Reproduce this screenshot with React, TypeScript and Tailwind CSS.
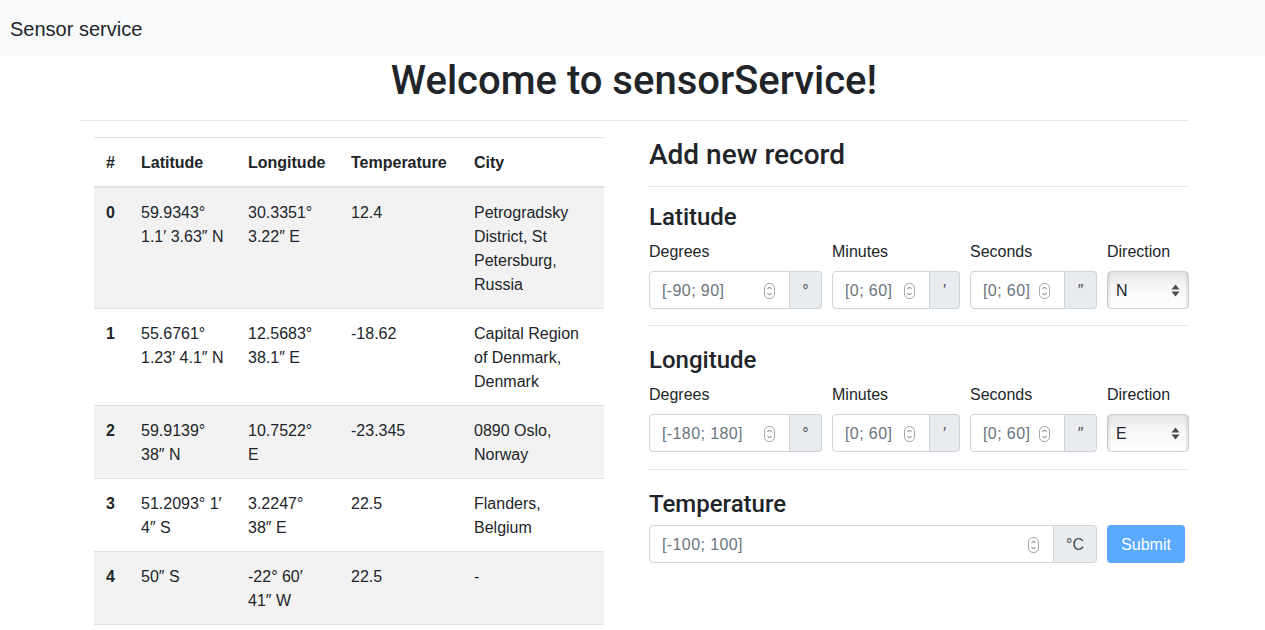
import React from "react"

type Row = {
  id: number
  lat: string[]
  lon: string[]
  temp: string
  city: string[]
}

const rows: Row[] = [
  { id: 0, lat: ["59.9343°", "1.1′ 3.63″ N"], lon: ["30.3351°", "3.22″ E"], temp: "12.4", city: ["Petrogradsky", "District, St", "Petersburg,", "Russia"] },
  { id: 1, lat: ["55.6761°", "1.23′ 4.1″ N"], lon: ["12.5683°", "38.1″ E"], temp: "-18.62", city: ["Capital Region", "of Denmark,", "Denmark"] },
  { id: 2, lat: ["59.9139°", "38″ N"], lon: ["10.7522°", "E"], temp: "-23.345", city: ["0890 Oslo,", "Norway"] },
  { id: 3, lat: ["51.2093° 1′", "4″ S"], lon: ["3.2247°", "38″ E"], temp: "22.5", city: ["Flanders,", "Belgium"] },
  { id: 4, lat: ["50″ S"], lon: ["-22° 60′", "41″ W"], temp: "22.5", city: ["-"] },
]

function Lines({ lines }: { lines: string[] }) {
  return (
    <>
      {lines.map((l, i) => (
        <div key={i} className="whitespace-nowrap">{l}</div>
      ))}
    </>
  )
}

function Spinner() {
  return (
    <svg width="11" height="16" viewBox="0 0 11 16" className="shrink-0">
      <rect x="0.5" y="0.5" width="10" height="15" rx="4.5" fill="white" stroke="#a8a8a8" />
      <path d="M3.5 6 L5.5 4 L7.5 6" fill="none" stroke="#6b6b6b" strokeWidth="1" />
      <path d="M3.5 10 L5.5 12 L7.5 10" fill="none" stroke="#6b6b6b" strokeWidth="1" />
    </svg>
  )
}

function NumberGroup({ placeholder, addon, addonClass }: { placeholder: string; addon: string; addonClass: string }) {
  return (
    <div className="flex h-[38px]">
      <div className="flex min-w-0 flex-1 items-center rounded-l border border-[#ced4da] bg-white pl-3 pr-[14px] pt-px">
        <span className="flex-1 whitespace-nowrap tracking-[0.4px] text-[#6c757d]">{placeholder}</span>
        <Spinner />
      </div>
      <div className={`flex items-center justify-center rounded-r border border-l-0 border-[#ced4da] bg-[#e9ecef] pt-px text-[#495057] ${addonClass}`}>
        {addon}
      </div>
    </div>
  )
}

function DirectionSelect({ value }: { value: string }) {
  return (
    <div className="flex h-[38px] items-center justify-between rounded border border-[#cfcfcf] bg-[linear-gradient(to_bottom,#e6e6e6,#f6f6f6_40%,#ffffff)] pt-px pl-2 pr-[8px] text-[#212529] shadow-[inset_3px_0_3px_-2px_rgba(0,0,0,0.14),inset_-3px_0_3px_-2px_rgba(0,0,0,0.14)]">
      <span>{value}</span>
      <svg width="9" height="13" viewBox="0 0 9 13">
        <path d="M4.5 0.5 L8.5 5.5 L0.5 5.5 Z" fill="#4a4a4a" />
        <path d="M4.5 12.5 L8.5 7.5 L0.5 7.5 Z" fill="#4a4a4a" />
      </svg>
    </div>
  )
}

const heading = "font-['Roboto','Liberation_Sans',sans-serif] font-medium"

function CoordSection({ title, degrees, dir, topClass }: { title: string; degrees: string; dir: string; topClass: string }) {
  return (
    <>
      <h4 className={`text-2xl leading-[29px] ${heading} ${topClass}`}>{title}</h4>
      <div className="mt-[7px] grid grid-cols-[173px_128px_127px_82px] gap-x-[10px]">
        <div>
          <label className="mb-[7px] block pt-px leading-6">Degrees</label>
          <NumberGroup placeholder={degrees} addon="°" addonClass="w-[32px]" />
        </div>
        <div>
          <label className="mb-[7px] block pt-px leading-6">Minutes</label>
          <NumberGroup placeholder="[0; 60]" addon="′" addonClass="w-[30px]" />
        </div>
        <div>
          <label className="mb-[7px] block pt-px leading-6">Seconds</label>
          <NumberGroup placeholder="[0; 60]" addon="″" addonClass="w-[32px]" />
        </div>
        <div>
          <label className="mb-[7px] block pt-px leading-6">Direction</label>
          <DirectionSelect value={dir} />
        </div>
      </div>
    </>
  )
}

export default function App() {
  return (
    <div className="min-h-screen bg-white font-['Liberation_Sans',Arial,sans-serif] text-base text-[#212529]">
      <nav className="flex h-14 items-center bg-[#f8f9fa] px-[10px] pt-px text-[20px]">Sensor service</nav>

      <div className="ml-[79px] w-[1110px]">
        <h1 className={`pt-px text-center text-[40px] leading-[47px] ${heading}`}>Welcome to sensorService!</h1>
        <hr className="mt-4 mb-4 border-[#e6e6e6]" />

        <div className="grid grid-cols-2 items-start gap-[30px]">
          <div className="px-[15px]">
            <table className="w-[510px] table-fixed border-collapse text-left">
              <colgroup>
                <col className="w-[35px]" />
                <col className="w-[107px]" />
                <col className="w-[103px]" />
                <col className="w-[123px]" />
                <col className="w-[142px]" />
              </colgroup>
              <thead>
                <tr className="border-t border-b-2 border-[#dee2e6]">
                  <th className="px-3 pt-[13px] pb-[11px] align-bottom leading-6 font-bold">#</th>
                  <th className="px-3 pt-[13px] pb-[11px] align-bottom leading-6 font-bold">Latitude</th>
                  <th className="px-3 pt-[13px] pb-[11px] align-bottom leading-6 font-bold">Longitude</th>
                  <th className="px-3 pt-[13px] pb-[11px] align-bottom leading-6 font-bold">Temperature</th>
                  <th className="px-3 pt-[13px] pb-[11px] align-bottom leading-6 font-bold">City</th>
                </tr>
              </thead>
              <tbody>
                {rows.map((r) => (
                  <tr key={r.id} className={`border-b border-[#dee2e6] ${r.id % 2 === 0 ? "bg-[#f2f2f2]" : "bg-white"}`}>
                    <th className="px-3 pt-[13px] pb-[11px] align-top leading-6 font-bold">{r.id}</th>
                    <td className="px-3 pt-[13px] pb-[11px] align-top leading-6"><Lines lines={r.lat} /></td>
                    <td className="px-3 pt-[13px] pb-[11px] align-top leading-6"><Lines lines={r.lon} /></td>
                    <td className="px-3 pt-[13px] pb-[11px] align-top leading-6">{r.temp}</td>
                    <td className="px-3 pt-[13px] pb-[11px] align-top leading-6"><Lines lines={r.city} /></td>
                  </tr>
                ))}
              </tbody>
            </table>
          </div>

          <div>
            <h3 className={`pt-px text-[28px] leading-[33px] ${heading}`}>Add new record</h3>
            <hr className="mt-[15px] border-[#e6e6e6]" />

            <CoordSection title="Latitude" degrees="[-90; 90]" dir="N" topClass="mt-4" />
            <hr className="mt-4 border-[#e6e6e6]" />

            <CoordSection title="Longitude" degrees="[-180; 180]" dir="E" topClass="mt-5" />
            <hr className="mt-[17px] border-[#e6e6e6]" />

            <h4 className={`mt-5 text-2xl leading-[29px] ${heading}`}>Temperature</h4>
            <div className="mt-[6px] flex gap-[10px]">
              <div className="w-[448px]">
                <NumberGroup placeholder="[-100; 100]" addon="°C" addonClass="w-[43px]" />
              </div>
              <button className="h-[38px] w-[78px] rounded bg-[#59a9ff] pt-px text-white">Submit</button>
            </div>
          </div>
        </div>
      </div>
    </div>
  )
}
